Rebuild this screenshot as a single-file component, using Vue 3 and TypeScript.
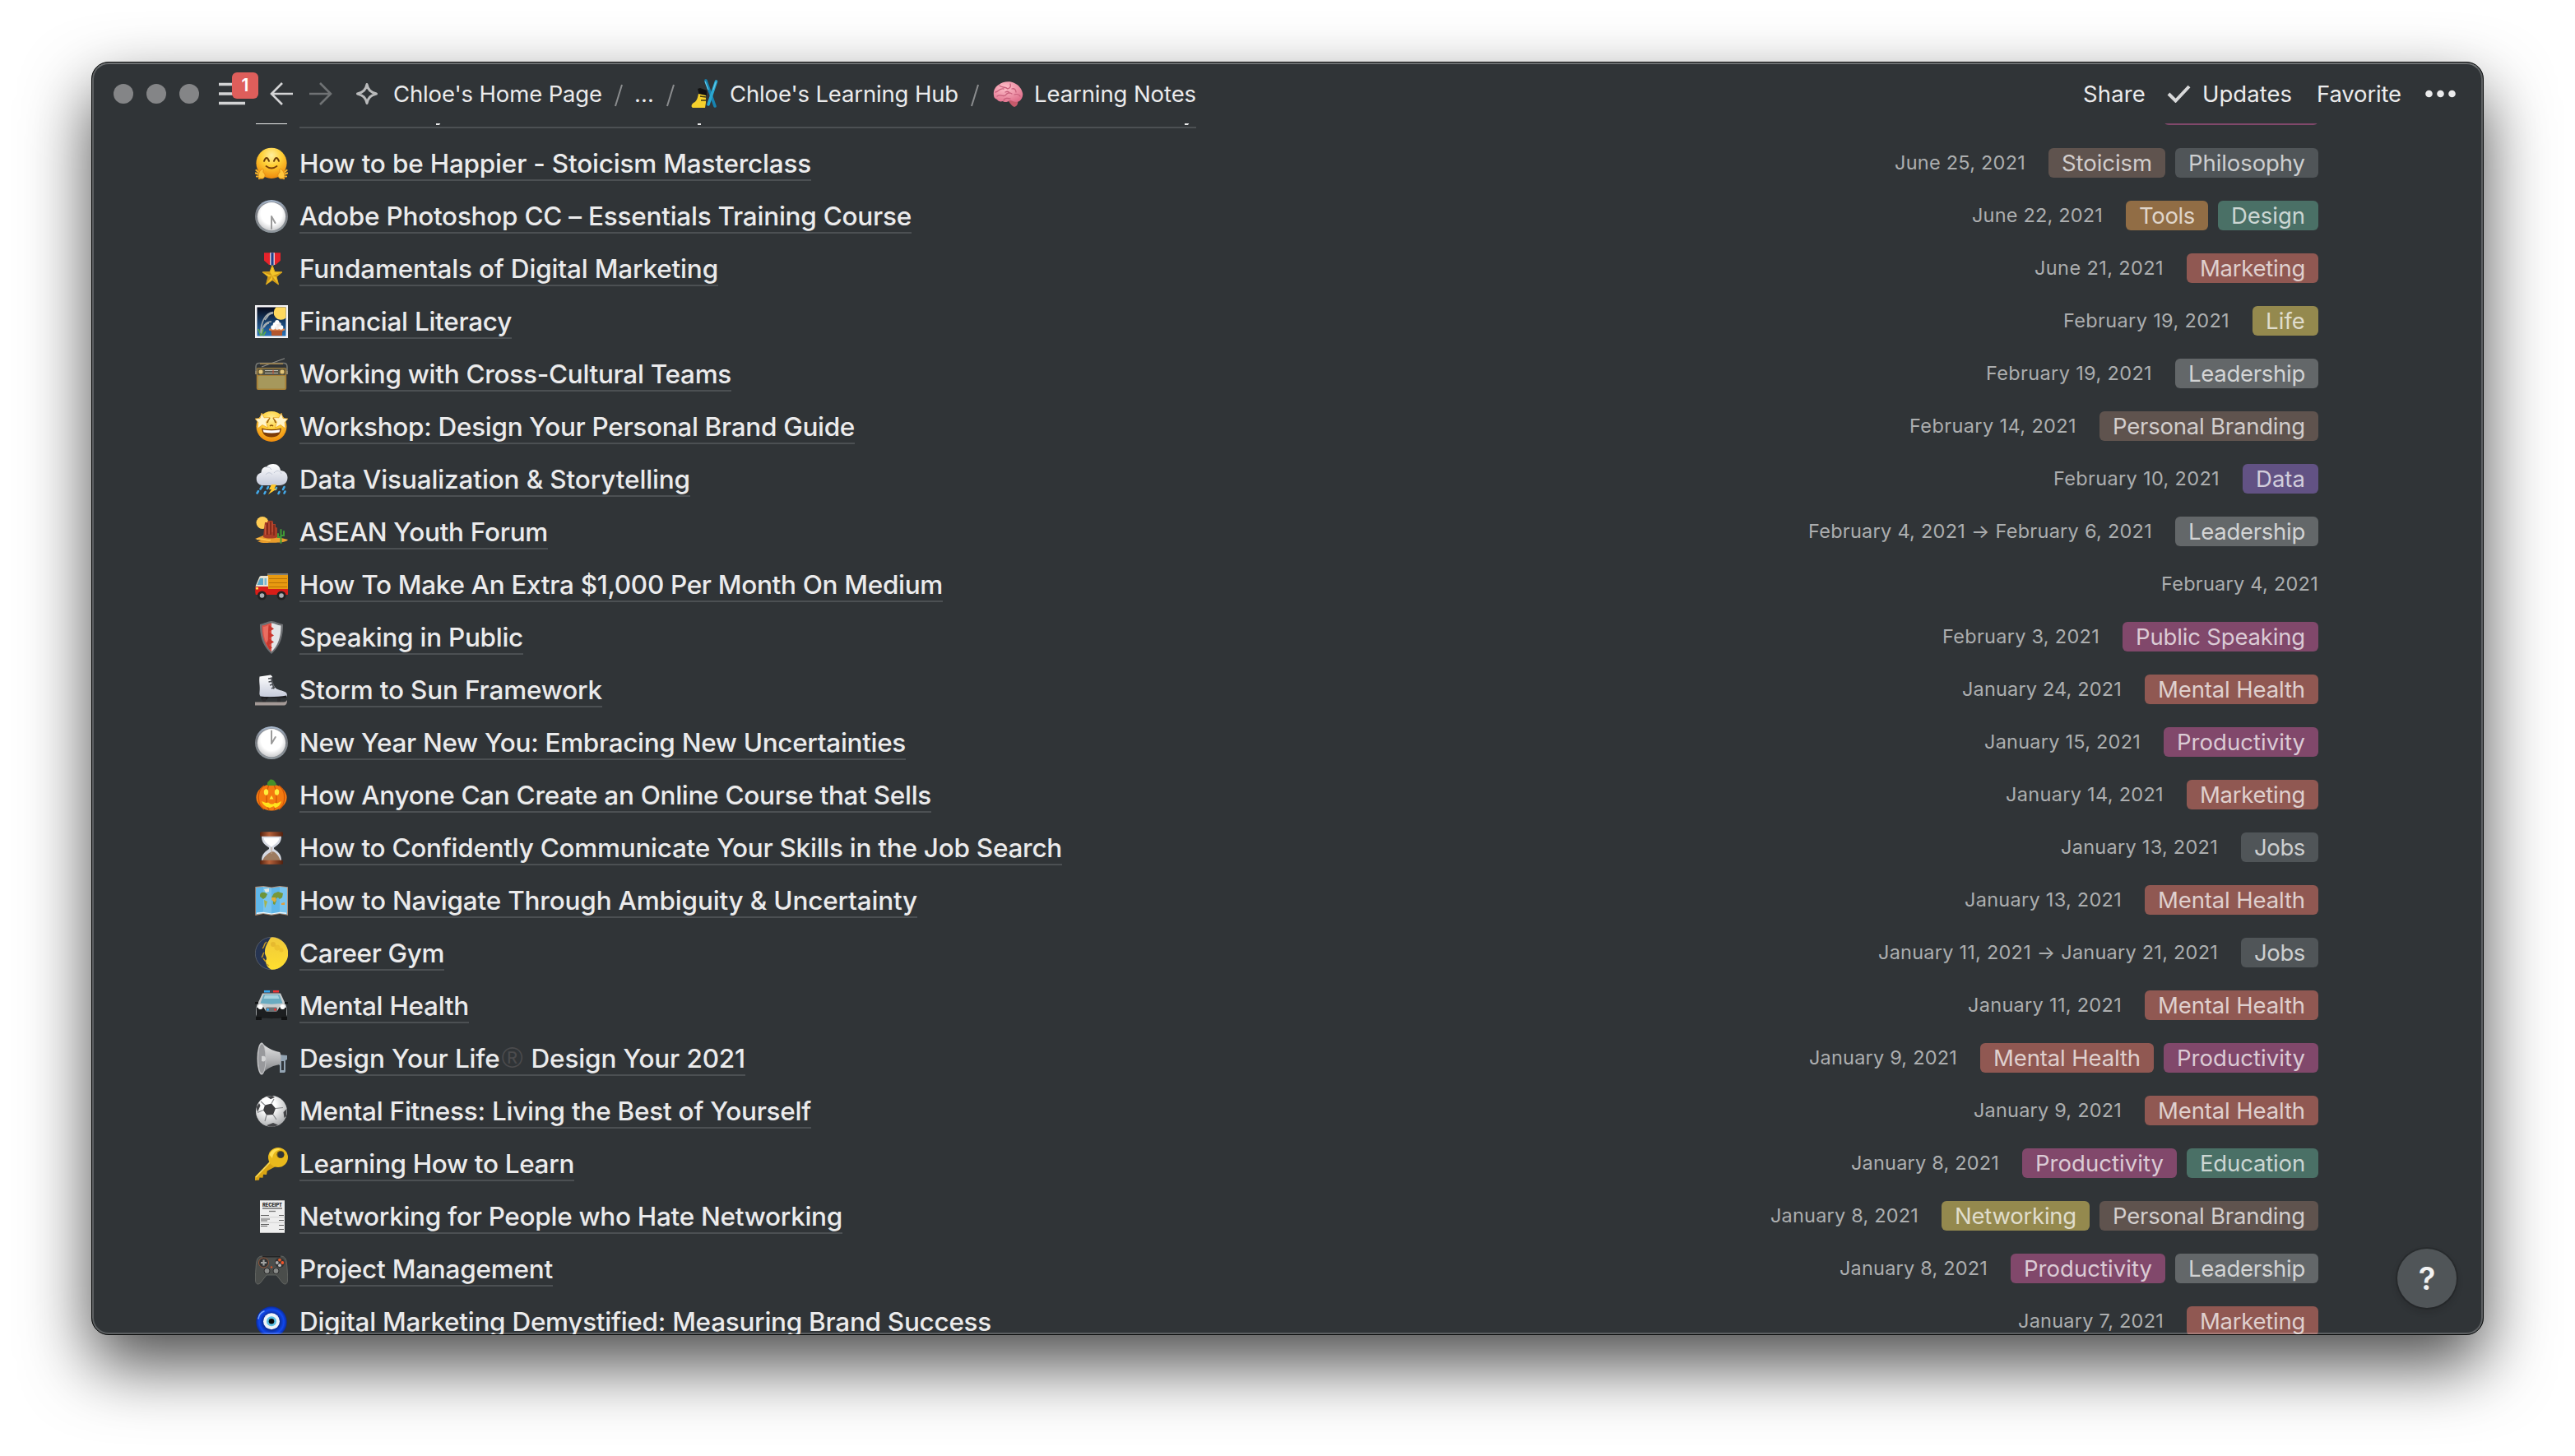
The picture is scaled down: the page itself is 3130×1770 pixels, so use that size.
<script setup lang="ts">
import type { Directive } from 'vue'

interface Tag { label: string; color: string; w: number }
interface Note { icon: string; title: string; w: number; date: string; dw: number; tags: Tag[] }

// Spreads the letters of an element so that its text fills the given width.
const vFit: Directive<HTMLElement, number> = {
  mounted(el, binding) {
    const natural = el.getBoundingClientRect().width
    const count = (el.textContent ?? '').length
    if (count > 0) el.style.letterSpacing = `${(binding.value - natural) / count}px`
  },
}

const T: Record<string, Tag> = {
  stoicism: { label: 'Stoicism', color: 'brown', w: 110 },
  philosophy: { label: 'Philosophy', color: 'gray', w: 142 },
  tools: { label: 'Tools', color: 'orange', w: 68 },
  design: { label: 'Design', color: 'green', w: 90 },
  marketing: { label: 'Marketing', color: 'red', w: 128 },
  life: { label: 'Life', color: 'yellow', w: 48 },
  leadership: { label: 'Leadership', color: 'light', w: 142 },
  branding: { label: 'Personal Branding', color: 'brown', w: 234 },
  data: { label: 'Data', color: 'purple', w: 60 },
  speaking: { label: 'Public Speaking', color: 'pink', w: 206 },
  health: { label: 'Mental Health', color: 'red', w: 179 },
  productivity: { label: 'Productivity', color: 'pink', w: 156 },
  jobs: { label: 'Jobs', color: 'gray', w: 62 },
  education: { label: 'Education', color: 'green', w: 128 },
  networking: { label: 'Networking', color: 'yellow', w: 148 },
}

const notes: Note[] = [
  { icon: 'hug', title: 'How to be Happier - Stoicism Masterclass', w: 622, date: 'June 25, 2021', dw: 159, tags: [T.stoicism, T.philosophy] },
  { icon: 'clock630', title: 'Adobe Photoshop CC – Essentials Training Course', w: 744, date: 'June 22, 2021', dw: 159, tags: [T.tools, T.design] },
  { icon: 'medal', title: 'Fundamentals of Digital Marketing', w: 509, date: 'June 21, 2021', dw: 157, tags: [T.marketing] },
  { icon: 'moonview', title: 'Financial Literacy', w: 258, date: 'February 19, 2021', dw: 202, tags: [T.life] },
  { icon: 'radio', title: 'Working with Cross-Cultural Teams', w: 525, date: 'February 19, 2021', dw: 202, tags: [T.leadership] },
  { icon: 'starstruck', title: 'Workshop: Design Your Personal Brand Guide', w: 675, date: 'February 14, 2021', dw: 203, tags: [T.branding] },
  { icon: 'storm', title: 'Data Visualization & Storytelling', w: 475, date: 'February 10, 2021', dw: 202, tags: [T.data] },
  { icon: 'desert', title: 'ASEAN Youth Forum', w: 302, date: 'February 4, 2021 → February 6, 2021', dw: 418, tags: [T.leadership] },
  { icon: 'truck', title: 'How To Make An Extra $1,000 Per Month On Medium', w: 782, date: 'February 4, 2021', dw: 191, tags: [] },
  { icon: 'shield', title: 'Speaking in Public', w: 272, date: 'February 3, 2021', dw: 191, tags: [T.speaking] },
  { icon: 'skate', title: 'Storm to Sun Framework', w: 368, date: 'January 24, 2021', dw: 194, tags: [T.health] },
  { icon: 'clock1', title: 'New Year New You: Embracing New Uncertainties', w: 737, date: 'January 15, 2021', dw: 190, tags: [T.productivity] },
  { icon: 'pumpkin', title: 'How Anyone Can Create an Online Course that Sells', w: 768, date: 'January 14, 2021', dw: 192, tags: [T.marketing] },
  { icon: 'hourglass', title: 'How to Confidently Communicate Your Skills in the Job Search', w: 927, date: 'January 13, 2021', dw: 191, tags: [T.jobs] },
  { icon: 'map', title: 'How to Navigate Through Ambiguity & Uncertainty', w: 751, date: 'January 13, 2021', dw: 191, tags: [T.health] },
  { icon: 'moon', title: 'Career Gym', w: 176, date: 'January 11, 2021 → January 21, 2021', dw: 413, tags: [T.jobs] },
  { icon: 'police', title: 'Mental Health', w: 206, date: 'January 11, 2021', dw: 187, tags: [T.health] },
  { icon: 'speaker', title: 'Design Your Life® Design Your 2021', w: 542, date: 'January 9, 2021', dw: 180, tags: [T.health, T.productivity] },
  { icon: 'soccer', title: 'Mental Fitness: Living the Best of Yourself', w: 622, date: 'January 9, 2021', dw: 180, tags: [T.health] },
  { icon: 'key', title: 'Learning How to Learn', w: 334, date: 'January 8, 2021', dw: 180, tags: [T.productivity, T.education] },
  { icon: 'receipt', title: 'Networking for People who Hate Networking', w: 660, date: 'January 8, 2021', dw: 180, tags: [T.networking, T.branding] },
  { icon: 'gamepad', title: 'Project Management', w: 308, date: 'January 8, 2021', dw: 180, tags: [T.productivity, T.leadership] },
  { icon: 'nazar', title: 'Digital Marketing Demystified: Measuring Brand Success', w: 841, date: 'January 7, 2021', dw: 177, tags: [T.marketing] },
]

const clockFace = `<circle cx="20" cy="20" r="20" fill="url(#g-rim)"/><circle cx="20" cy="20" r="17.6" fill="#83868b"/><circle cx="20" cy="20.2" r="17.1" fill="url(#g-dial)"/>`

const art: Record<string, string> = {
  hug: `<circle cx="20" cy="19.3" r="18.6" fill="url(#g-face)"/>
    <path d="M11 16.8q3-7.5 6 0M23 16.8q3-7.5 6 0" fill="none" stroke="#6b3d08" stroke-width="2" stroke-linecap="round"/>
    <path d="M13.5 23q6.500 5 13 0" fill="none" stroke="#7a4208" stroke-width="1.800" stroke-linecap="round"/>
    <path d="M1.500 28l3.500 3M.8 31.500l4.500 1.800M2 35.500l4 0M5 38l4-2" stroke="#f7b32b" stroke-width="2.200" stroke-linecap="round"/>
    <path d="M38.500 28l-3.500 3M39.200 31.500l-4.500 1.800M38 35.500l-4 0M35 38l-4-2" stroke="#f7b32b" stroke-width="2.200" stroke-linecap="round"/>
    <path d="M4.500 32c1-3 3.500-6 5-5.500s0 3 .5 4c2 2 3 4 1 6.500s-6 1-7-1z" fill="#ffc63c" stroke="#d98210" stroke-width=".7"/>
    <path d="M35.500 32c-1-3-3.500-6-5-5.500s0 3-.5 4c-2 2-3 4-1 6.500s6 1 7-1z" fill="#ffc63c" stroke="#d98210" stroke-width=".7"/>`,
  clock630: clockFace + `<path d="M20 35V20l4.500 8" fill="none" stroke="#9b9b9b" stroke-width="2" stroke-linecap="round" stroke-linejoin="round"/>`,
  clock1: clockFace + `<path d="M20 5.500V21l4.800-8" fill="none" stroke="#9b9b9b" stroke-width="2" stroke-linecap="round" stroke-linejoin="round"/>`,
  medal: `<path d="M11 .3h20v9.500L25 15h-8l-6-5.200z" fill="#e5232b"/><path d="M18.200.3h5.600v14.500L21 16.500l-2.800-1.800z" fill="#e9e9f2"/><path d="M19.400.3h3.200v15.400l-1.600.8-1.600-.8z" fill="#20418c"/>
    <path d="M21 15.500l3 8 9 .3-7 5.600 2.500 9.400-7.500-5.300-7.500 5.300 2.500-9.400-7-5.600 9-.3z" fill="#f3c529" stroke="#dca81c" stroke-width="1"/><path d="M21 15.500v13l7.500 10.300-7.500-5.300zM33 23.800L21 28.500l5 .9zM9 23.800l12 4.700-3-5zM13.500 38.800L21 28.500l-5 .9z" fill="#cf9718"/>`,
  moonview: `<path d="M0 0h40v40H0z" fill="#f4f3f5"/><path d="M2.500 2.500h35v35h-35z" fill="url(#g-night)"/><path d="M25.500 2.500h12v13A8.500 8.500 0 0 1 25.500 2.500z" fill="#ffd95e"/>
    <path d="M7 34C7 22 12 9 22 8.500M8 35c1-10 5-15 12-15M22 10c-4 0-6 2-8 5M12 18l4-5M17 22c-3 0-5 3-6 5" fill="none" stroke="#a5adb0" stroke-width="1.600"/><path d="M4 29l3 8M10 29l-2 8M13 32l-3 5" stroke="#5ba64c" stroke-width="1.600"/>
    <path d="M18 29h17l-2 4v4H20v-4z" fill="#b3562e"/><path d="M17 28.500h19v2.200H17z" fill="#e08850"/><circle cx="22" cy="27" r="2.800" fill="#fff"/><circle cx="27" cy="27" r="2.800" fill="#f4f0ee"/><circle cx="31.500" cy="27" r="2.800" fill="#fff"/><circle cx="24.500" cy="23.500" r="2.800" fill="#fff"/><circle cx="29" cy="23.500" r="2.800" fill="#efeae8"/><circle cx="26.800" cy="20.500" r="2.600" fill="#fff"/>`,
  radio: `<path d="M8 11L36 .8" stroke="#8c8c88" stroke-width="1.100"/><path d="M1 16v-5c0-3 1.500-4.500 4-4.500h30c2.500 0 4 1.500 4 4.500v5" fill="none" stroke="#777974" stroke-width="1.500"/><path d="M6 7.200h28" stroke="#a5854a" stroke-width="1.500"/>
    <rect x="1.800" y="12" width="36.400" height="27" rx="2" fill="#a77f35"/><rect x="3" y="13" width="34" height="8" fill="#555446"/><rect x="3.600" y="22" width="32.800" height="15.600" rx="1" fill="#a6985c"/><circle cx="7" cy="17" r="3" fill="#e2c67c" stroke="#806a35"/><circle cx="33" cy="17" r="3" fill="#e2c67c" stroke="#806a35"/><path d="M12 15.500h16M12 18.500h16" stroke="#c0bdb0" stroke-width="1.200"/><path d="M22 14.500v5" stroke="#d04a2d"/><path d="M0 16h2v4H0zM38 16h2v4h-2z" fill="#87806c"/>`,
  starstruck: `<circle cx="20" cy="19.500" r="18.500" fill="url(#g-face)"/><path d="M14 13q3-5 6-4 3-1 6 4" fill="none" stroke="#7c4808" stroke-width="0"/><path d="M15 15q1-4 3-6M25 15q-1-4-3-6M18 19q2-2 4 0" fill="none" stroke="#8c5208" stroke-width="1.500"/>
    <path d="M8 3l3 5.800 7-.3-4.500 5.500 2 7L9 17.500 3 22l.8-7.500L0 10l6-.5zM32 3l-3 5.800-7-.3 4.500 5.500-2 7L31 17.500l6 4.500-.8-7.500L40 10l-6-.5z" fill="#fff4c8" stroke="#e7a11e" stroke-width=".7"/>
    <path d="M8 21.500q12 3 24 0-1 11-12 11T8 21.500z" fill="#7c3c08"/><path d="M9.500 23.200q10.500 2 21 0l-1 3.200q-9.500 2-19 0z" fill="#fff"/>`,
  storm: `<path d="M8 27a8 8 0 0 1-.5-15.500C8 6 11 4.500 14 4.500 16 1.500 19 1 22 1c5 0 8.500 3.500 9 8 4.500 0 8.500 3.500 8.500 8.500 0 6-4 9.500-9.500 9.500z" fill="url(#g-cloud)"/><path d="M14 5c3-.5 5 1 6 3M13 14c2-3 6-3 8 0M23 12c3-4 8-3 9 1" fill="none" stroke="#c2c8d6" stroke-width="1"/>
    <path d="M8.500 28.500l-2 3M16 29l-1 2M26 30l-1 2M35.500 29l-1.500 3M4 34l-1.500 2.500M12.500 35l-1 2M29.500 35l-1 2M36.500 34.500l-1 2" stroke="#42a8e8" stroke-width="2.600" stroke-linecap="round"/><path d="M20 26h6l-2.500 5H27l-11 7 4-6h-3z" fill="#ffc82e"/>`,
  desert: `<circle cx="9" cy="8.500" r="7.500" fill="#ffcc54"/><path d="M0 28l10-4 18 2 12 3c-1 2-4 2-6 3-3 1-14 .5-19 1-4 .3-8 0-12-2l4-1z" fill="#e89c2c"/><path d="M10 26l1-10 1-8h3l.5-2h6l.5 4h3v4l2 .5V24l1 2c-6 2-13 2-18 0z" fill="#a83c26"/><path d="M15 9v14M19 7v16M23 11v13" stroke="#7a2419" stroke-width="1.500"/><path d="M17 8v14M21 8v12M12.500 11v12" stroke="#c5563a" stroke-width="1"/><path d="M31.500 33V17M28 22v4h3M35 19v5h-3" fill="none" stroke="#3f9a35" stroke-width="2" stroke-linecap="round"/><path d="M2 28.500c6-2 10 2 17 1" fill="none" stroke="#ffc855" stroke-width="1.500"/>`,
  truck: `<path d="M15 6h25v23H15z" fill="#e89a10"/><path d="M15 6h25v2H15z" fill="#7d7c75"/><path d="M17 12.500h22M17 17.500h22M17 22.500h22" stroke="#b87204" stroke-width="1.200"/><path d="M5 11c.5-1.500 1.500-2 3-2h8v16H.8v-4z" fill="#e8e1d0"/><path d="M6 12h4v8H2.500z" fill="#5ba6c5"/><path d="M11.500 12H14v8h-2.500z" fill="#7bbbd2"/><path d="M.8 22H16v3h24v7H.8C0 29 0 25 .8 22z" fill="#d81d18"/><path d="M1 23h3v2.500H1z" fill="#ffd850"/><circle cx="8.500" cy="33" r="5.500" fill="#222"/><circle cx="32" cy="33" r="5.500" fill="#222"/><circle cx="8.500" cy="33" r="2.800" fill="#aab0b4"/><circle cx="32" cy="33" r="2.800" fill="#aab0b4"/>`,
  shield: `<path d="M6 4C11 3 16 0 20 0s9 3 14 4c.5 17-5 28-14 36C11 32 5.500 21 6 4z" fill="#6e7073"/><path d="M8.500 5.500C13 5 16 3 20 2.500v34.800C12 30 8.300 19 8.500 5.500z" fill="#dd5147"/><path d="M31.500 5.500C27 5 24 3 20 2.500v34.800c8-7.300 11.700-18.300 11.500-31.800z" fill="#e3e5e7"/><path d="M17 5l6 4.500-6 3.500 6 4.500-6 3.500 6 4.500-6 3.500 4 3.500-3.500 2-4-8z" fill="#c8362d"/><path d="M10 7c3-.3 4-1 6-2v18l-2 4c-3-6-4-12-4-20z" fill="#ef7d70" opacity=".65"/>`,
  skate: `<path d="M5.500 3.500L19 1.500l2 2c-1 4 1 10 4 14 3 3 12 3 13.500 6.500.8 2 .3 4-1 4.500L8 28.500c-2-1-3-3-2.500-6C6.500 15 4.500 10 5.500 3.500z" fill="url(#g-cloud)"/><path d="M16 6l5-.5M16.500 10l5-.8M18 14l5-1.500M20 18l4-2M19.500 4.500l3.500 14" stroke="#4b4e53" stroke-width="1.700"/><path d="M7 27.500c5 1 22 1 31-1v3H16l-2 2H8z" fill="#1d1d20"/><path d="M9 30h4v5H9zM27 30h4v5h-4z" fill="#2b2b2e"/><path d="M0 34.500h35c2 0 3-1 4-2.500 0 4-1 6.500-4 6.500H0z" fill="#a39996"/>`,
  pumpkin: `<ellipse cx="20" cy="22.500" rx="18.600" ry="16" fill="#f47a10"/><path d="M11 8C2 14 2 31 11 37M17 7c-4 9-4 23 0 31M29 8c9 6 9 23 0 29M23 7c4 9 4 23 0 31" fill="none" stroke="#cf5607" stroke-width="1.300"/><path d="M15 5c0-2 2-2 3-4 2-1 5 0 6 2s3 3 1 5H15z" fill="#46902a"/><ellipse cx="13.500" cy="16" rx="2.700" ry="3.700" fill="#ffed3c"/><ellipse cx="26.500" cy="16" rx="2.700" ry="3.700" fill="#ffed3c"/><path d="M20 20l2.500 4.500h-5z" fill="#ffed3c"/><path d="M8 27l5 2 3-.5 3 2h3l2-1.500 3 .5 5-2.500c-1.500 6-6 8-8 8l-1-2-5 2c-5-1-8.500-3.500-10-8z" fill="#ffe31c"/>`,
  hourglass: `<path d="M8 5h24c0 7-2 10-9 14.500V21c7 4.500 9 8 9 15H8c0-7 2-10.500 9-15v-1.500C10 15 8 12 8 5z" fill="#d5d9e2"/><path d="M10.500 7.500h19c-1 5.500-5 7.500-9.500 11-4.500-3.500-8.500-5.500-9.500-11z" fill="#fff"/><path d="M9 35.500c1.500-5 6.500-9 11-11s9.500 6 11 11z" fill="#9c7b60"/><path d="M20 19v8" stroke="#bda58e" stroke-width="1"/><rect x="6" y=".2" width="28" height="5.600" rx="1.500" fill="url(#g-wood)"/><rect x="6" y="34.800" width="28" height="5" rx="1.500" fill="url(#g-wood)"/>`,
  map: `<path d="M.3 3L10 2l10 1.500L30 2l10 1.200v34.600L30 36l-10 1.800L10 36 .3 38z" fill="#b5937a"/><path d="M1 4l9-1 10 1.500L30 3l9 1v32.500L30 35l-10 1.500L10 35l-9 1.500z" fill="#60b7e9"/><path d="M10 3l10 1.500v32L10 35zM30 3l9 1v32.500L30 35z" fill="#8acdf0" opacity=".6"/><path d="M11 6l6-1v4l-4 1z" fill="#e0e8e0"/><path d="M6 13c0-3 3-4 6-3l3 2-2 4-3 2-4-3z" fill="#6d9438"/><path d="M11 19l4 2-2 6-1 2z" fill="#a8b44b"/><path d="M20 16l3-5 5-2 6 2-1 5-3 2-2-2-2 1 0 3-2 5-2-1v-5z" fill="#77983a"/><path d="M20 16h5l1 3-2 3-4-3z" fill="#dcae42"/><path d="M32 23l4-1v3h-4z" fill="#e0a040"/><path d="M2 34.500l8-.7 10 1.700 10-1.700 8 .7v1.500l-8-1-10 1.500L10 35l-8 1z" fill="#f2f6f8"/>`,
  moon: `<circle cx="20" cy="20" r="19.700" fill="#263451" stroke="#6e747c" stroke-width=".6"/><path d="M21 .3a19.700 19.700 0 1 1-1 39.400c-5-2-7-7-7-11 3-4-2-6-1-11 0-6 4-12 7-17z" fill="url(#g-moon)"/><path d="M14 6c-4 3-2 6-5 8M11 19c-2 2-1 4-3 6M13 30l-3-4M17 35l-3-2" fill="none" stroke="#c59a27" stroke-width="1.500"/><circle cx="27" cy="13" r="3.500" fill="#e8b92a" opacity=".6"/><circle cx="22" cy="9" r="3" fill="#d9a526" opacity=".5"/><circle cx="32" cy="16" r="2.500" fill="#e9ba28" opacity=".6"/>`,
  police: `<rect x="10.500" y=".5" width="19" height="3.600" rx="1" fill="#3e4450"/><path d="M11 1h7v2.500h-7z" fill="#36a7ee"/><path d="M22 1h7v2.500h-7z" fill="#ed3434"/><path d="M9 4.500h22l5.500 12c2 3 2.500 9 2 15H1.500c-.5-6 0-12 2-15z" fill="#c9cccd"/><path d="M10.500 6h19l4 10.500c-8 1.500-19 1.500-27 0z" fill="#6aabc1"/><path d="M12 7h16l1.500 4h-19z" fill="#a8d3df"/><path d="M2 22l8-1 3 5h14l3-5 8 1v12c-8 1.500-28 1.500-36 0z" fill="#1c1e20"/><circle cx="6.500" cy="21" r="3" fill="#fff"/><circle cx="33.500" cy="21" r="3" fill="#fff"/><rect x="13" y="21.500" width="14" height="5.500" rx="1.500" fill="#6d7376"/><circle cx="15.500" cy="24.300" r="1.500" fill="#35a5ef"/><circle cx="24.500" cy="24.300" r="1.500" fill="#ef3838"/><path d="M1 33h7v4H1zM32 33h7v4h-7zM0 15h4v2.500H0zM36 15h4v2.500h-4z" fill="#121314"/>`,
  speaker: `<path d="M28 15l11 1v5l-2 1v13c0 1.500-1 2-2 2h-5v-9l-4-3z" fill="#93a4b3"/><path d="M32 23h3v11h-3z" fill="#31363b"/><path d="M8 .5c4 4 10 9 22 11.500 2 2 2 12 0 15C18 29 12 34 8 39.500z" fill="url(#g-horn)"/><ellipse cx="8" cy="20" rx="5.500" ry="19.600" fill="#c4c5c7"/><ellipse cx="8.300" cy="20" rx="4.300" ry="17.800" fill="#98999c"/><path d="M8 17c3-1 5 0 5 3s-2 4-5 3z" fill="#d4d5d6"/>`,
  soccer: `<circle cx="20" cy="20" r="19" fill="url(#g-ball)"/><path d="M12 12.500l8-2 5 6-3 7.500-8 .5-4-6z" fill="#3d3d3f"/><path d="M12 12.500L7 8M20 10.500L23 5M25 16.500l9-1M22 24l4 6M14 24.500L12 32M10 18.500l-7 3" stroke="#86888b" stroke-width="1.200"/><path d="M14 1.800l7-.7 3 1.800-5 2.400zM1.500 15L5 10l1.500 3L3 21zM38.500 17l-4 4 1 7 2.500-2zM14 37l8-3 6 2.500C23 39.600 18 39.500 14 37z" fill="#444548"/>`,
  key: `<path d="M19 16L0 35.500V40l5-.5.500-3 4 .2.500-4 4 .2.800-4.400L27 22z" fill="#d9a414"/><path d="M19 17L1 36" stroke="#f6d754" stroke-width="1.800"/><circle cx="28" cy="12" r="12" fill="#e9b91c"/><path d="M17.500 9A11 11 0 0 1 32 2c-6 1-10 4-11 11z" fill="#ffdf54"/><circle cx="31" cy="8.500" r="4.600" fill="#6e5617"/><circle cx="31.500" cy="8.700" r="3.700" fill="#303437"/>`,
  receipt: `<path d="M6 .3h30v39.400H6z" fill="#eeeeee"/><text x="21" y="8" font-family="Inter, sans-serif" font-size="5.800" font-weight="800" text-anchor="middle" textLength="24" fill="#222">RECEIPT</text><path d="M9 10h24" stroke="#666" stroke-width="1.400"/><path d="M17 13.500h8" stroke="#777" stroke-width="1.300"/><path d="M7 18.500h10M29 18.500h6M7 23h11M29 24.500h6M7 25h8M7 29.500h10M29 30.500h6M7 31.500h8M29 35.500h6" stroke="#606060" stroke-width="1.100"/><path d="M6 20.700h30M6 27.300h30" stroke="#b6b6b6" stroke-width=".5"/>`,
  gamepad: `<path d="M9 4c-5 0-7 3-7.500 9C1 19 0 28 .5 34c.5 5 4 5 6.500 2l7-9h12l7 9c2.500 3 6 3 6.500-2 .5-6-.5-15-1-21C38 7 36 4 31 4z" fill="#4a4d4b" stroke="#6a6c68" stroke-width=".8"/><path d="M9 3.500h22v2H9z" fill="#232526"/><circle cx="10.500" cy="12" r="6" fill="#313334" stroke="#9c5839" stroke-width=".9"/><path d="M10.500 8.500v7M7 12h7" stroke="#a1a3a1" stroke-width="2.200"/><circle cx="30" cy="12" r="6" fill="#313334"/><circle cx="30" cy="8.700" r="1.900" fill="#e05a2b"/><circle cx="33.300" cy="12" r="1.900" fill="#f1542a"/><circle cx="26.800" cy="12" r="1.900" fill="#aaa"/><circle cx="30" cy="15.200" r="1.900" fill="#bbb"/><circle cx="14.500" cy="22" r="3.500" fill="#888a88" stroke="#29292a"/><circle cx="25.500" cy="22" r="3.500" fill="#888a88" stroke="#29292a"/><circle cx="20" cy="17.500" r="1.200" fill="#d75428"/>`,
  nazar: `<circle cx="20" cy="20" r="18.700" fill="url(#g-nazar)"/><circle cx="20" cy="19.300" r="10" fill="#f0f4f8"/><circle cx="20" cy="19.300" r="6" fill="#5cc0e2"/><circle cx="20" cy="19.300" r="3.300" fill="#080808"/><path d="M4 16c1-5 4-8 7-9" fill="none" stroke="#75a4ff" stroke-width="1.500" stroke-linecap="round"/>`,
}
</script>

<template>
  <svg class="paints" width="0" height="0">
    <defs>
      <radialGradient id="g-face" cx=".5" cy=".25" r=".75"><stop offset="0" stop-color="#fff0a0" /><stop offset=".45" stop-color="#ffcf35" /><stop offset="1" stop-color="#ee8a0c" /></radialGradient>
      <linearGradient id="g-rim" x2="0" y2="1"><stop offset="0" stop-color="#a9bad0" /><stop offset=".4" stop-color="#777a80" /><stop offset="1" stop-color="#90999f" /></linearGradient>
      <radialGradient id="g-dial" cx=".5" cy=".4" r=".62"><stop offset=".6" stop-color="#ffffff" /><stop offset="1" stop-color="#c9cacc" /></radialGradient>
      <linearGradient id="g-night" x2="0" y2="1"><stop offset="0" stop-color="#050919" /><stop offset="1" stop-color="#2a75bb" /></linearGradient>
      <linearGradient id="g-cloud" x2="0" y2="1"><stop offset="0" stop-color="#ffffff" /><stop offset="1" stop-color="#c5cada" /></linearGradient>
      <linearGradient id="g-wood"><stop offset="0" stop-color="#51200e" /><stop offset=".4" stop-color="#b8623a" /><stop offset="1" stop-color="#51200e" /></linearGradient>
      <linearGradient id="g-moon" x2="0" y2="1"><stop offset="0" stop-color="#efc83b" /><stop offset="1" stop-color="#ffdf2f" /></linearGradient>
      <linearGradient id="g-horn" x2="0" y2="1"><stop offset="0" stop-color="#e6e6e6" /><stop offset=".5" stop-color="#b7b8ba" /><stop offset="1" stop-color="#77797c" /></linearGradient>
      <radialGradient id="g-ball" cx=".4" cy=".3" r=".75"><stop offset=".3" stop-color="#ffffff" /><stop offset="1" stop-color="#a6a8aa" /></radialGradient>
      <radialGradient id="g-nazar"><stop offset=".5" stop-color="#0b2a90" /><stop offset=".8" stop-color="#1048ee" /><stop offset="1" stop-color="#0a2a9c" /></radialGradient>
      <radialGradient id="g-brain" cx=".4" cy=".3" r=".75"><stop offset="0" stop-color="#ffc0ca" /><stop offset="1" stop-color="#e0708c" /></radialGradient>
    </defs>
  </svg>

  <div class="desktop">
    <div class="window">
      <header class="bar">
        <div class="lights"><i /><i /><i /></div>
        <div class="menu">
          <svg width="32" height="28" viewBox="0 0 32 28"><path d="M0 2.500h32M0 14h32M0 25.500h32" stroke="#d3d4d5" stroke-width="3.600" /></svg>
          <span class="badge">1</span>
        </div>
        <svg class="back" width="28" height="28" viewBox="0 0 28 28"><path d="M28 14H2M15 1L2 14l13 13" fill="none" stroke="#d3d4d5" stroke-width="2.600" /></svg>
        <svg class="forward" width="28" height="28" viewBox="0 0 28 28"><path d="M0 14h26M13 1l13 13-13 13" fill="none" stroke="#6f7274" stroke-width="2.600" /></svg>
        <svg class="spark" width="28" height="28" viewBox="0 0 28 28"><path d="M14 2.500C15.500 9.500 18.500 12 25.500 14 18.500 16 15.500 18.500 14 25.500 12.500 18.500 9.500 16 2.500 14 9.500 12 12.500 9.500 14 2.500z" fill="none" stroke="#b9babb" stroke-width="3" stroke-linejoin="round" /></svg>
        <span v-fit="254" class="crumb home">Chloe's Home Page</span>
        <svg class="slash" width="10" height="28" viewBox="0 0 10 28"><path d="M9 1L1 27" stroke="#8b8d8f" stroke-width="2" /></svg>
        <span v-fit="24" class="crumb dots">...</span>
        <svg class="slash" width="10" height="28" viewBox="0 0 10 28"><path d="M9 1L1 27" stroke="#8b8d8f" stroke-width="2" /></svg>
        <svg class="ski" width="33" height="37" viewBox="0 0 33 37">
          <path d="M18 2l11 31" stroke="#1783b0" stroke-width="3.600" stroke-linecap="round" /><path d="M30.500 3L21 31" stroke="#2aa7d0" stroke-width="3.600" stroke-linecap="round" />
          <path d="M17 3l4 10M30 4l-3 9" stroke="#61cae9" stroke-width="1.300" />
          <path d="M8 12l3-1 8 3v6l-9-1z" fill="#111" /><path d="M9 18l9 2v9l-1 6H2c-2-1-2-4 1-6 4-2 5-6 6-11z" fill="#f5d02c" /><path d="M11 21l7 1M12 26h6" stroke="#3d3510" stroke-width="1.600" />
        </svg>
        <span v-fit="278" class="crumb hub">Chloe's Learning Hub</span>
        <svg class="slash" width="10" height="28" viewBox="0 0 10 28"><path d="M9 1L1 27" stroke="#8b8d8f" stroke-width="2" /></svg>
        <svg class="brain" width="37" height="31" viewBox="0 0 37 31">
          <path d="M22 22c3 0 6 1 8 2 1 3-1 6-4 7-3-1-5-4-7-7z" fill="#c65a6b" /><path d="M1 17C0 11 3 6 7 4c4-4 14-5 19-2 5 2 9 7 10 12 1 4-1 8-4 10-4 2-7 0-11-1-3 2-7 3-9 1-3 1-6 0-7-2-3-1-4-3-4-5z" fill="url(#g-brain)" />
          <path d="M3 13c4-1 5-5 10-4M8 5c2 3 7 1 10 4 3-1 4-3 3-6M5 18c4-3 6 1 10-1 2-3 5-4 8-2M13 23c1-3 5-3 8-2M23 9c3-1 5 1 5 4M26 16c3-1 6 0 7 2M15 13c2-1 4-1 5 1" fill="none" stroke="#c8607c" stroke-width="1.300" stroke-linecap="round" />
        </svg>
        <span v-fit="197" class="crumb page">Learning Notes</span>

        <div class="actions">
          <span v-fit="76" class="share">Share</span>
          <svg width="29" height="22" viewBox="0 0 29 22"><path d="M2 11l8.500 8.500L27 2" fill="none" stroke="#d8d9da" stroke-width="4" /></svg>
          <span v-fit="109" class="updates">Updates</span>
          <span v-fit="103" class="favorite">Favorite</span>
          <svg width="37" height="10" viewBox="0 0 37 10"><g fill="#ebebec"><circle cx="4.500" cy="5" r="4.300" /><circle cx="18.500" cy="5" r="4.300" /><circle cx="32.500" cy="5" r="4.300" /></g></svg>
        </div>
      </header>

      <main class="viewport">
        <ul class="list">
          <li class="row">
            <svg class="icon" viewBox="0 0 40 40"><path d="M1 8h38v28H1z" fill="#ececec" /></svg>
            <svg class="hidden-title" width="1090" height="42" viewBox="0 0 1090 42"><path d="M0 41h1090" stroke="#4c5053" stroke-width="2" /><path d="M166 35h6l-2 3h-4zM484 35h4v3h-4zM1076 35h6l-2 3h-4z" fill="#ebebec" /></svg>
            <div class="meta"><span class="tag pink blank" /></div>
          </li>
          <li v-for="note in notes" :key="note.title" class="row">
            <svg class="icon" viewBox="0 0 40 40" v-html="art[note.icon]" />
            <span v-fit="note.w" class="title"><template v-for="(part, i) in note.title.split('®')" :key="i"><span v-if="i > 0" class="mark">®</span>{{ part }}</template></span>
            <div class="meta">
              <span v-fit="note.dw" class="date">{{ note.date }}</span>
              <div v-if="note.tags.length" class="tags">
                <span v-for="tag in note.tags" :key="tag.label" class="tag" :class="tag.color"><span v-fit="tag.w">{{ tag.label }}</span></span>
              </div>
            </div>
          </li>
        </ul>
      </main>
      <button class="help">?</button>
    </div>
  </div>
</template>

<style>
body {
  background: #fff;
}
</style>

<style scoped>
.paints {
  position: absolute;
}
.desktop {
  box-sizing: border-box;
  width: 3130px;
  height: 1770px;
  padding: 75px 111px;
  overflow: hidden;
  background: #fff;
  font-family: Inter, 'Liberation Sans', sans-serif;
}
.window {
  position: relative;
  box-sizing: border-box;
  display: flex;
  flex-direction: column;
  width: 2908px;
  height: 1548px;
  border: 1px solid #060808;
  border-radius: 21px;
  overflow: hidden;
  background: #303437;
  box-shadow: 0 36px 82px rgba(0, 0, 0, 0.7);
}
.window::after {
  content: '';
  position: absolute;
  inset: 0;
  border: 2px solid rgba(255, 255, 255, 0.22);
  border-top-color: rgba(255, 255, 255, 0.3);
  border-radius: 20px;
  pointer-events: none;
}
.bar {
  box-sizing: border-box;
  flex: none;
  display: flex;
  align-items: center;
  height: 74px;
  padding: 2px 33px 0 26px;
  font-size: 27.500px;
  line-height: 36px;
  color: #ebebec;
  white-space: nowrap;
}
.bar svg,
.bar span {
  flex: none;
}
.lights {
  display: flex;
  gap: 16px;
}
.lights i {
  width: 24px;
  height: 24px;
  border-radius: 50%;
  background: #848587;
}
.menu {
  position: relative;
  width: 48px;
  height: 28px;
  margin-left: 24px;
}
.menu svg {
  display: block;
}
.badge {
  position: absolute;
  left: 16px;
  top: -12px;
  width: 32px;
  height: 32px;
  border-radius: 6px;
  background: #de5e5b;
  color: #fff;
  font-size: 21px;
  font-weight: 600;
  line-height: 31px;
  text-align: center;
}
.back { margin-left: 14px; }
.forward { margin-left: 20px; }
.spark { margin-left: 28px; }
.home { margin-left: 18px; }
.slash { margin: 4px 0 0 15px; }
.dots { margin-left: 14px; }
.ski { margin-left: 20px; }
.hub { margin-left: 14px; }
.brain { margin-left: 17px; }
.page { margin-left: 13px; }
.actions {
  display: flex;
  align-items: center;
  margin-left: auto;
}
.share { margin-right: 26px; }
.updates { margin: 0 30px 0 14px; }
.favorite { margin-right: 29px; }
.viewport {
  flex: 1;
  min-height: 0;
  overflow: hidden;
}
.list {
  list-style: none;
  margin: -48px 0 0;
  padding: 0 200px 0 198px;
}
.row {
  display: flex;
  align-items: center;
  height: 64px;
  white-space: nowrap;
}
.icon {
  flex: none;
  width: 40px;
  height: 40px;
  margin: 2px 14px 0 0;
}
.hidden-title {
  flex: none;
  margin-top: 2px;
}
.title {
  flex: none;
  box-sizing: border-box;
  height: 42px;
  margin-top: 2px;
  border-bottom: 2px solid #4c5053;
  font-size: 31.500px;
  font-weight: 540;
  line-height: 42px;
  color: #ebebec;
}
.mark {
  margin: 0 2px;
  font-family: 'Liberation Sans', sans-serif;
  font-size: 35px;
  font-weight: 400;
  line-height: 0;
  color: #4b4b4d;
}
.meta {
  display: flex;
  align-items: center;
  margin-left: auto;
}
.date {
  margin-top: -1px;
  font-size: 23.500px;
  line-height: 36px;
  color: #acaeaf;
}
.tags {
  display: flex;
  gap: 12px;
  margin-left: 28px;
}
.tag {
  height: 36px;
  padding: 0 16px;
  border-radius: 6px;
  font-size: 27.500px;
  line-height: 36px;
  color: rgba(255, 255, 255, 0.72);
}
.blank {
  width: 156px;
}
.brown { background: #5f534e; }
.gray { background: #505558; }
.light { background: #636769; }
.orange { background: #916d45; }
.green { background: #4a7066; }
.red { background: #905852; }
.yellow { background: #94894e; }
.purple { background: #625284; }
.pink { background: #81486b; }
.help {
  position: absolute;
  right: 32px;
  bottom: 32px;
  width: 72px;
  height: 72px;
  padding: 0;
  border: 0;
  border-radius: 50%;
  background: #505558;
  box-shadow: 0 0 0 2px rgba(15, 15, 15, 0.2), 0 4px 8px rgba(15, 15, 15, 0.2);
  color: #f2f2f2;
  font: 600 38px/72px Inter, sans-serif;
}
</style>
